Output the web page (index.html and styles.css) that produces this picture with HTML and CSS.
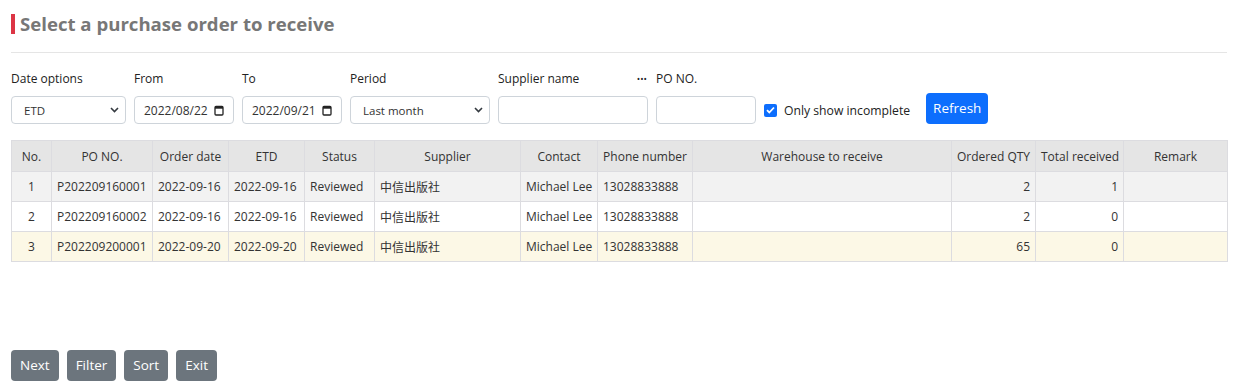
FILE: index.html
```html
<!DOCTYPE html>
<html lang="en">

<head>
  <meta charset="UTF-8" />
  <title>Receive Purchase Order</title>
  <meta name="viewport" content="width=device-width, initial-scale=1.0" />
  <link rel="stylesheet" href="styles.css">
</head>

<body>
  <div class="page">
    <h1 class="page-title">Select a purchase order to receive</h1>

    <div class="filters">
      <div class="field w-115">
        <label>Date options</label>
        <div class="control select">
          <span>ETD</span>
          <svg class="chevron" width="9" height="6" viewBox="0 0 9 6"><path d="M1 1l3.5 3.5L8 1" fill="none" stroke="#343a40" stroke-width="1.6" /></svg>
        </div>
      </div>
      <div class="field w-100">
        <label>From</label>
        <div class="control date">
          <span>2022/08/22</span>
          <svg width="10" height="11" viewBox="0 0 10 11"><rect x="1" y="1.5" width="8" height="8.5" rx="1" fill="none" stroke="#222" stroke-width="1.3" /><rect x="1" y="1.5" width="8" height="2.2" fill="#222" /></svg>
        </div>
      </div>
      <div class="field w-100">
        <label>To</label>
        <div class="control date">
          <span>2022/09/21</span>
          <svg width="10" height="11" viewBox="0 0 10 11"><rect x="1" y="1.5" width="8" height="8.5" rx="1" fill="none" stroke="#222" stroke-width="1.3" /><rect x="1" y="1.5" width="8" height="2.2" fill="#222" /></svg>
        </div>
      </div>
      <div class="field w-140">
        <label>Period</label>
        <div class="control select">
          <span>Last month</span>
          <svg class="chevron" width="9" height="6" viewBox="0 0 9 6"><path d="M1 1l3.5 3.5L8 1" fill="none" stroke="#343a40" stroke-width="1.6" /></svg>
        </div>
      </div>
      <div class="field w-150">
        <label class="label-row">Supplier name <span class="more">•••</span></label>
        <div class="control"></div>
      </div>
      <div class="field w-100">
        <label>PO NO.</label>
        <div class="control"></div>
      </div>
      <div class="check">
        <span class="checkbox">
          <svg width="9" height="8" viewBox="0 0 9 8"><path d="M1 4.2l2.3 2.3L8 1.5" fill="none" stroke="#fff" stroke-width="1.8" /></svg>
        </span>
        Only show incomplete
      </div>
      <button class="btn btn-primary">Refresh</button>
    </div>

    <table class="orders">
      <colgroup>
        <col style="width:40px">
        <col style="width:101px">
        <col style="width:76px">
        <col style="width:76px">
        <col style="width:70px">
        <col style="width:146px">
        <col style="width:77px">
        <col style="width:95px">
        <col style="width:259px">
        <col style="width:84px">
        <col style="width:88px">
        <col style="width:104px">
      </colgroup>
      <thead>
        <tr>
          <th>No.</th>
          <th>PO NO.</th>
          <th>Order date</th>
          <th>ETD</th>
          <th>Status</th>
          <th>Supplier</th>
          <th>Contact</th>
          <th>Phone number</th>
          <th>Warehouse to receive</th>
          <th>Ordered QTY</th>
          <th>Total received</th>
          <th>Remark</th>
        </tr>
      </thead>
      <tbody>
        <tr class="striped">
          <td class="center">1</td>
          <td>P202209160001</td>
          <td>2022-09-16</td>
          <td>2022-09-16</td>
          <td>Reviewed</td>
          <td>中信出版社</td>
          <td>Michael Lee</td>
          <td>13028833888</td>
          <td></td>
          <td class="num">2</td>
          <td class="num">1</td>
          <td></td>
        </tr>
        <tr>
          <td class="center">2</td>
          <td>P202209160002</td>
          <td>2022-09-16</td>
          <td>2022-09-16</td>
          <td>Reviewed</td>
          <td>中信出版社</td>
          <td>Michael Lee</td>
          <td>13028833888</td>
          <td></td>
          <td class="num">2</td>
          <td class="num">0</td>
          <td></td>
        </tr>
        <tr class="selected">
          <td class="center">3</td>
          <td>P202209200001</td>
          <td>2022-09-20</td>
          <td>2022-09-20</td>
          <td>Reviewed</td>
          <td>中信出版社</td>
          <td>Michael Lee</td>
          <td>13028833888</td>
          <td></td>
          <td class="num">65</td>
          <td class="num">0</td>
          <td></td>
        </tr>
      </tbody>
    </table>

    <div class="actions">
      <button class="btn btn-secondary">Next</button>
      <button class="btn btn-secondary">Filter</button>
      <button class="btn btn-secondary">Sort</button>
      <button class="btn btn-secondary">Exit</button>
    </div>
  </div>
</body>

</html>
```

FILE: styles.css
```css
* {
  box-sizing: border-box;
  margin: 0;
  padding: 0;
}

body {
  font-family: 'Open Sans', 'Noto Sans CJK SC', sans-serif;
  font-size: 12px;
  color: #333;
  background: #fff;
}

.page {
  display: flex;
  flex-direction: column;
  min-height: 100vh;
  padding: 14px 7px 6px 11px;
}

/* title with the red marker on the left */
.page-title {
  position: relative;
  padding: 0 0 18px 9px;
  border-bottom: 1px solid #e5e5e5;
  font-size: 18.6px;
  line-height: 20px;
  font-weight: bold;
  color: #777;
}

.page-title::before {
  content: "";
  position: absolute;
  left: 0;
  top: 0;
  width: 4px;
  height: 20px;
  background: #dc3545;
}

.filters {
  display: flex;
  align-items: flex-end;
  gap: 8px;
  margin-top: 17px;
}

.field {
  display: flex;
  flex-direction: column;
  gap: 8px;
}

.field label {
  line-height: 18px;
  color: #222;
}

.label-row {
  display: flex;
  justify-content: space-between;
}

.more {
  font-size: 9px;
  padding-right: 1px;
}

.w-100 { width: 100px; }
.w-115 { width: 115px; }
.w-140 { width: 140px; }
.w-150 { width: 150px; }

.control {
  height: 28px;
  border: 1px solid #ced4da;
  border-radius: 4px;
  background: #fff;
  display: flex;
  align-items: center;
  justify-content: space-between;
  color: #333;
}

.control.select {
  padding: 0 6px 0 12px;
  font-size: 11.5px;
}

.control.date {
  padding: 0 9px;
}

.check {
  height: 28px;
  display: flex;
  align-items: center;
  gap: 7px;
  font-size: 12.2px;
  color: #222;
  margin-right: 8px;
}

.checkbox {
  width: 13px;
  height: 13px;
  border-radius: 2px;
  background: #0d6efd;
  display: flex;
  align-items: center;
  justify-content: center;
}

.btn {
  font-family: inherit;
  font-size: 13.5px;
  line-height: 21px;
  padding: 5px 8px;
  border: none;
  border-radius: 4px;
  color: #fff;
  cursor: pointer;
}

.btn-primary {
  background-color: #0d6efd;
  padding: 5px 7px;
}

.btn-secondary {
  background-color: #6c757d;
  padding: 5px 9px;
}

.orders {
  width: 1216px;
  table-layout: fixed;
  border-collapse: collapse;
  margin-top: 16px;
  border: 1px solid #dcdce0;
}

.orders th,
.orders td {
  border: 1px solid #dcdce0;
  padding: 0 5px;
  white-space: nowrap;
  overflow: hidden;
  text-align: left;
}

.orders th {
  height: 31px;
  background: #e5e5e5;
  font-weight: normal;
  text-align: center;
  color: #333;
}

.orders td {
  height: 30px;
}

.orders td.center {
  text-align: center;
}

.orders td.num {
  text-align: right;
}

.orders .striped td {
  background: #f2f2f2;
}

.orders .selected td {
  background: #fcf8e6;
}

.actions {
  margin-top: auto;
  display: flex;
  gap: 8px;
}
```
